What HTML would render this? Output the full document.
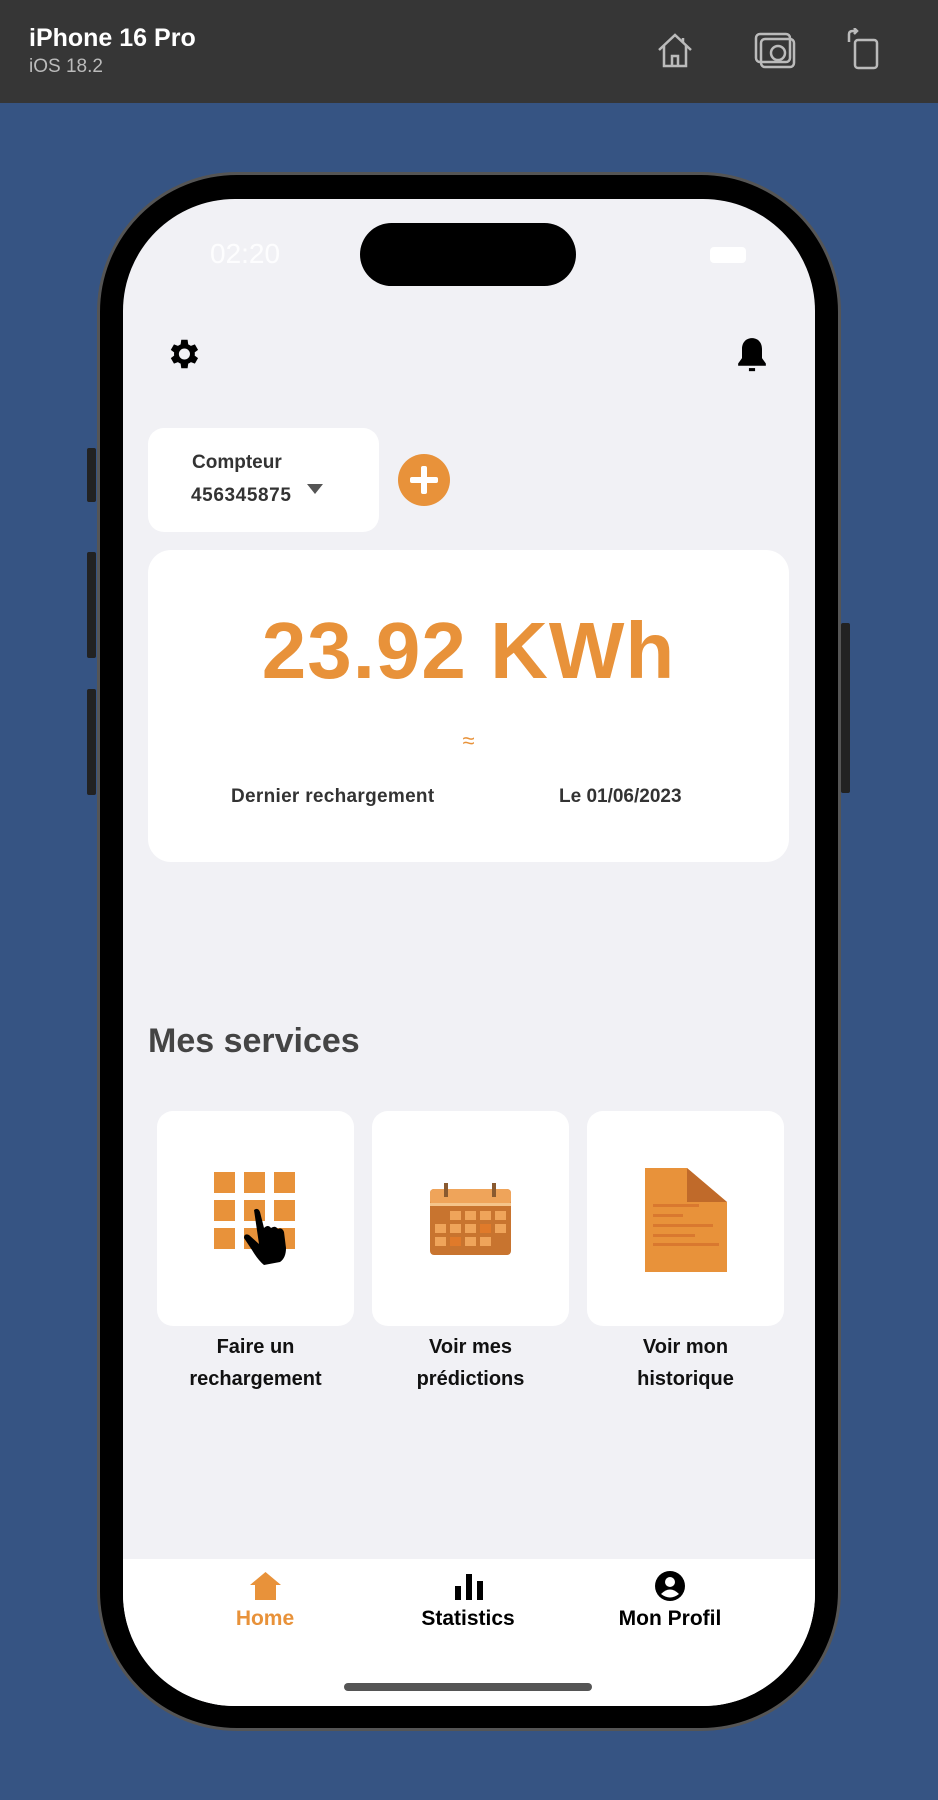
<!DOCTYPE html>
<html><head><meta charset="utf-8"><style>
*{margin:0;padding:0;box-sizing:border-box}
body{width:938px;height:1800px;background:#365483;position:relative;overflow:hidden;font-family:"Liberation Sans",sans-serif}
.a{position:absolute}
.top{left:0;top:0;width:938px;height:103px;background:#363636}
.t{white-space:nowrap}
.card{background:#fff}
.lbl{font-weight:bold;font-size:20px;color:#111;text-align:center;line-height:32px}
</style></head><body>
<div class="a top"></div>
<div class="a t" style="left:29px;top:24px;color:#fff;font-weight:bold;font-size:25px">iPhone 16 Pro</div>
<div class="a t" style="left:29px;top:56px;color:#bbb;font-size:19px">iOS 18.2</div>
<svg class="a" style="left:655px;top:30px" width="40" height="40" viewBox="0 0 40 40" fill="none" stroke="#bbb" stroke-width="2.5"><path d="M4 20 L20 5 L36 20 M9 16 V36 H31 V16 M17 36 V26 H23 V36"/><path d="M28 8 V13"/></svg>
<svg class="a" style="left:753px;top:30px" width="44" height="40" viewBox="0 0 44 40" fill="none" stroke="#bbb" stroke-width="2.5"><rect x="3" y="4" width="34" height="28" rx="4"/><rect x="8" y="9" width="33" height="28" rx="4"/><circle cx="25" cy="23" r="7"/></svg>
<svg class="a" style="left:845px;top:28px" width="36" height="42" viewBox="0 0 36 42" fill="none" stroke="#bbb" stroke-width="2.5"><rect x="10" y="12" width="22" height="28" rx="3"/><path d="M4 14 V6 Q4 3 8 3 H12 M9 0 L12 3 L9 6"/></svg>

<div class="a" style="left:87px;top:448px;width:9px;height:54px;background:#222;border-radius:2px"></div>
<div class="a" style="left:87px;top:552px;width:9px;height:106px;background:#222;border-radius:2px"></div>
<div class="a" style="left:87px;top:689px;width:9px;height:106px;background:#222;border-radius:2px"></div>
<div class="a" style="left:841px;top:623px;width:9px;height:170px;background:#222;border-radius:2px"></div>

<div class="a" style="left:97px;top:172px;width:744px;height:1559px;border-radius:140px;background:#000;border:3px solid #555"></div>
<div class="a" style="left:123px;top:199px;width:692px;height:1507px;border-radius:112px;background:#f1f1f5;overflow:hidden">
  <div class="a" style="left:0;top:1360px;width:692px;height:200px;background:#fff"></div>
</div>
<div class="a" style="left:360px;top:223px;width:216px;height:63px;border-radius:32px;background:#000"></div>
<div class="a t" style="left:210px;top:238px;color:#fff;font-size:28px;opacity:.9">02:20</div>
<div class="a" style="left:710px;top:247px;width:36px;height:16px;border-radius:4px;background:#fff"></div>

<svg class="a" style="left:164px;top:335px" width="38" height="38" viewBox="0 0 24 24"><path fill="#000" d="M19.4 13a7.5 7.5 0 0 0 0-2l2.1-1.6-2-3.5-2.5 1a7.6 7.6 0 0 0-1.7-1L14.9 3h-4l-.4 2.9a7.6 7.6 0 0 0-1.7 1l-2.5-1-2 3.5L6.4 11a7.5 7.5 0 0 0 0 2l-2.1 1.6 2 3.5 2.5-1c.5.4 1.1.7 1.7 1l.4 2.9h4l.4-2.9c.6-.3 1.2-.6 1.7-1l2.5 1 2-3.5zM12.9 15.5a3.5 3.5 0 1 1 0-7 3.5 3.5 0 0 1 0 7z"/></svg>
<svg class="a" style="left:733px;top:335px" width="38" height="40" viewBox="0 0 24 26"><path fill="#000" d="M12 2c-4 0-6.5 3-6.5 7v6L3 18.5V20h18v-1.5L18.5 15V9c0-4-2.5-7-6.5-7z"/><rect x="10" y="21.5" width="4" height="2" fill="#000"/></svg>

<div class="a card" style="left:148px;top:428px;width:231px;height:104px;border-radius:16px"></div>
<div class="a t" style="left:192px;top:452px;font-weight:bold;font-size:19px;color:#333">Compteur</div>
<div class="a t" style="left:191px;top:485px;font-weight:bold;font-size:19px;color:#333;letter-spacing:0.6px">456345875</div>
<div class="a" style="left:307px;top:484px;width:0;height:0;border-left:8px solid transparent;border-right:8px solid transparent;border-top:10px solid #555"></div>
<div class="a" style="left:398px;top:454px;width:52px;height:52px;border-radius:50%;background:#E8923A"></div>
<div class="a" style="left:421px;top:466px;width:6px;height:28px;background:#fff;border-radius:2px"></div>
<div class="a" style="left:410px;top:477px;width:28px;height:6px;background:#fff;border-radius:2px"></div>

<div class="a card" style="left:148px;top:550px;width:641px;height:312px;border-radius:23px"></div>
<div class="a t" style="left:148px;width:641px;top:604px;text-align:center;font-weight:bold;font-size:80px;color:#E8923A;letter-spacing:1px;line-height:94px">23.92 KWh</div>
<div class="a t" style="left:148px;width:641px;top:728px;text-align:center;font-size:22px;color:#E8923A">≈</div>
<div class="a t" style="left:231px;top:786px;font-weight:bold;font-size:19px;color:#333;letter-spacing:0.3px">Dernier rechargement</div>
<div class="a t" style="left:559px;top:786px;font-weight:bold;font-size:19px;color:#333">Le 01/06/2023</div>

<div class="a t" style="left:148px;top:1022px;font-weight:bold;font-size:34px;color:#444">Mes services</div>

<div class="a card" style="left:157px;top:1111px;width:197px;height:215px;border-radius:16px"></div>
<div class="a card" style="left:372px;top:1111px;width:197px;height:215px;border-radius:16px"></div>
<div class="a card" style="left:587px;top:1111px;width:197px;height:215px;border-radius:16px"></div>

<svg class="a" style="left:214px;top:1172px" width="84" height="96" viewBox="0 0 84 96">
<g fill="#E8923A"><rect x="0" y="0" width="21" height="21"/><rect x="30" y="0" width="21" height="21"/><rect x="60" y="0" width="21" height="21"/><rect x="0" y="28" width="21" height="21"/><rect x="30" y="28" width="21" height="21"/><rect x="60" y="28" width="21" height="21"/><rect x="0" y="56" width="21" height="21"/><rect x="30" y="56" width="21" height="21"/><rect x="60" y="56" width="21" height="21"/></g>
<path fill="#000" d="M40 38 Q44 35 46 40 L50 56 Q54 52 57 56 Q61 53 64 57 Q68 55 70 60 L72 76 Q72 86 66 90 L50 93 Q44 88 38 78 L30 66 Q30 61 35 63 L45 72 Z"/>
</svg>

<svg class="a" style="left:430px;top:1183px" width="81" height="72" viewBox="0 0 81 72">
<rect x="0" y="6" width="81" height="66" rx="4" fill="#C8742F"/>
<rect x="0" y="6" width="81" height="16" rx="4" fill="#EFA45A"/>
<rect x="0" y="20" width="81" height="3" fill="#F5C48A"/>
<rect x="14" y="0" width="4" height="14" fill="#8a5a30"/><rect x="62" y="0" width="4" height="14" fill="#8a5a30"/>
<g fill="#EFA45A"><rect x="20" y="28" width="11" height="9"/><rect x="35" y="28" width="11" height="9"/><rect x="50" y="28" width="11" height="9"/><rect x="65" y="28" width="11" height="9"/><rect x="5" y="41" width="11" height="9"/><rect x="20" y="41" width="11" height="9"/><rect x="35" y="41" width="11" height="9"/><rect x="50" y="41" width="11" height="9" fill="#E07A2A"/><rect x="65" y="41" width="11" height="9"/><rect x="5" y="54" width="11" height="9"/><rect x="20" y="54" width="11" height="9" fill="#E07A2A"/><rect x="35" y="54" width="11" height="9"/><rect x="50" y="54" width="11" height="9"/></g>
</svg>

<svg class="a" style="left:645px;top:1168px" width="82" height="104" viewBox="0 0 82 104">
<path d="M0 0 H42 L82 34 V104 H0 Z" fill="#E8923A"/>
<path d="M42 0 L82 34 H42 Z" fill="#C06A2A"/>
<g fill="#D9782F"><rect x="8" y="36" width="46" height="3"/><rect x="8" y="46" width="30" height="3"/><rect x="8" y="56" width="60" height="3"/><rect x="8" y="66" width="42" height="3"/><rect x="8" y="75" width="66" height="3"/></g>
</svg>

<div class="a lbl" style="left:157px;top:1331px;width:197px">Faire un<br>rechargement</div>
<div class="a lbl" style="left:372px;top:1331px;width:197px">Voir mes<br>prédictions</div>
<div class="a lbl" style="left:587px;top:1331px;width:197px">Voir mon<br>historique</div>

<svg class="a" style="left:250px;top:1572px" width="31" height="28" viewBox="0 0 31 28"><path fill="#E8923A" d="M15.5 0 L31 13 H26 V28 H5 V13 H0 Z"/></svg>
<div class="a t" style="left:205px;width:120px;top:1607px;text-align:center;font-weight:bold;font-size:21px;color:#E8923A">Home</div>
<svg class="a" style="left:455px;top:1572px" width="28" height="28" viewBox="0 0 28 28"><rect x="0" y="14" width="6" height="14" fill="#000"/><rect x="11" y="2" width="6" height="26" fill="#000"/><rect x="22" y="9" width="6" height="19" fill="#000"/></svg>
<div class="a t" style="left:388px;width:160px;top:1607px;text-align:center;font-weight:bold;font-size:21px;color:#000">Statistics</div>
<svg class="a" style="left:655px;top:1571px" width="30" height="30" viewBox="0 0 30 30"><circle cx="15" cy="15" r="15" fill="#000"/><circle cx="15" cy="11" r="5" fill="#fff"/><path d="M6 23 Q15 14 24 23 Q15 30 6 23Z" fill="#fff"/></svg>
<div class="a t" style="left:590px;width:160px;top:1607px;text-align:center;font-weight:bold;font-size:21px;color:#000">Mon Profil</div>
<div class="a" style="left:344px;top:1683px;width:248px;height:8px;border-radius:4px;background:#555"></div>
</body></html>
